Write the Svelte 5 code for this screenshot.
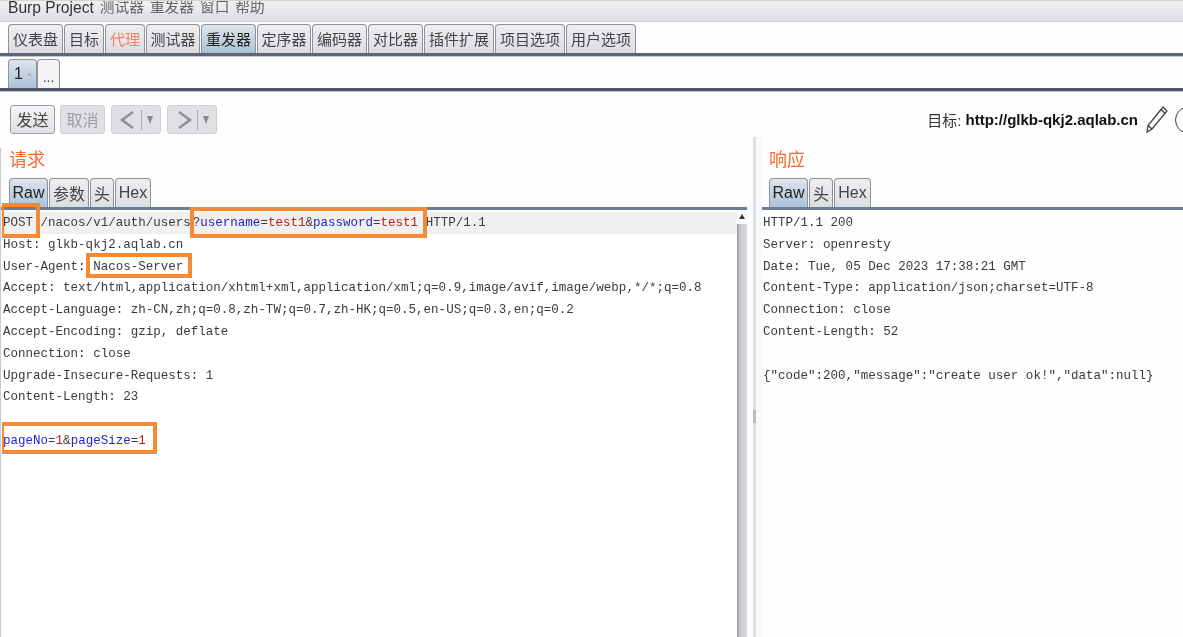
<script>
  const mainTabs = [
    { label: '仪表盘', w: 55 },
    { label: '目标', w: 40 },
    { label: '代理', w: 40, hot: true },
    { label: '测试器', w: 54 },
    { label: '重发器', w: 55, active: true },
    { label: '定序器', w: 54 },
    { label: '编码器', w: 55 },
    { label: '对比器', w: 55 },
    { label: '插件扩展', w: 70 },
    { label: '项目选项', w: 70 },
    { label: '用户选项', w: 70 }
  ];
  const menus = ['测试器', '重发器', '窗口', '帮助'];
  const requestTabs = [
    { label: 'Raw', w: 39, active: true },
    { label: '参数', w: 40 },
    { label: '头', w: 24 },
    { label: 'Hex', w: 36 }
  ];
  const responseTabs = [
    { label: 'Raw', w: 39, active: true },
    { label: '头', w: 24 },
    { label: 'Hex', w: 37 }
  ];
  const requestHeaders = [
    'Host: glkb-qkj2.aqlab.cn',
    'User-Agent: Nacos-Server',
    'Accept: text/html,application/xhtml+xml,application/xml;q=0.9,image/avif,image/webp,*/*;q=0.8',
    'Accept-Language: zh-CN,zh;q=0.8,zh-TW;q=0.7,zh-HK;q=0.5,en-US;q=0.3,en;q=0.2',
    'Accept-Encoding: gzip, deflate',
    'Connection: close',
    'Upgrade-Insecure-Requests: 1',
    'Content-Length: 23'
  ];
  const responseLines = [
    'HTTP/1.1 200',
    'Server: openresty',
    'Date: Tue, 05 Dec 2023 17:38:21 GMT',
    'Content-Type: application/json;charset=UTF-8',
    'Connection: close',
    'Content-Length: 52',
    '',
    '{"code":200,"message":"create user ok!","data":null}'
  ];
</script>

<div class="app">
  <div class="menubar">
    <span class="brand">Burp Project</span>
    {#each menus as m}
      <span class="menu">{m}</span>
    {/each}
  </div>

  <div class="tabs main-tabs">
    {#each mainTabs as t}
      <div class="tab" class:active={t.active} class:hot={t.hot} style="width: {t.w}px">{t.label}</div>
    {/each}
  </div>

  <div class="tabs sub-tabs">
    <div class="tab active first">1<span class="x">×</span></div>
    <div class="tab more">...</div>
  </div>

  <div class="toolbar">
    <button class="btn send">发送</button>
    <button class="btn off">取消</button>
    <button class="btn off nav">
      <svg width="20" height="20" viewBox="0 0 20 20"><path d="M15 2 L4 10 L15 18" fill="none" stroke="#8c8f93" stroke-width="2.6" /></svg>
      <i></i>
      <svg width="10" height="10" viewBox="0 0 10 10"><path d="M2 1 H8 L5 9 Z" fill="#85888c" /></svg>
    </button>
    <button class="btn off nav">
      <svg width="20" height="20" viewBox="0 0 20 20"><path d="M5 2 L16 10 L5 18" fill="none" stroke="#8c8f93" stroke-width="2.6" /></svg>
      <i></i>
      <svg width="10" height="10" viewBox="0 0 10 10"><path d="M2 1 H8 L5 9 Z" fill="#85888c" /></svg>
    </button>
    <div class="target">
      目标: <b>http://glkb-qkj2.aqlab.cn</b>
      <svg class="pencil" width="22" height="27" viewBox="0 0 22 27">
        <path d="M17 1 L21 5 L6 23 L1 26 L2 19.5 Z M2 19.5 L6 23 M15 3.5 L19 7.5" fill="none" stroke="#3a3a3a" stroke-width="1.2" />
      </svg>
      <span class="help"></span>
    </div>
  </div>

  <div class="panes">
    <section class="pane left">
      <h2>请求</h2>
      <div class="tabs editor-tabs">
        {#each requestTabs as t}
          <div class="tab" class:active={t.active} style="width: {t.w}px">{t.label}</div>
        {/each}
      </div>
      <div class="editor">
        <div class="code">
          <div class="line current">POST /nacos/v1/auth/users<span class="q">?</span><span class="k">username</span>=<span class="v">test1</span>&<span class="k">password</span>=<span class="v">test1</span> HTTP/1.1</div>
          {#each requestHeaders as line}
            <div class="line">{line}</div>
          {/each}
          <div class="line"></div>
          <div class="line"><span class="k">pageNo</span>=<span class="v">1</span>&<span class="k">pageSize</span>=<span class="v">1</span></div>
        </div>
        <div class="scrollbar">
          <span class="arrow"></span>
          <span class="thumb"></span>
        </div>
        <span class="mark post"></span>
        <span class="mark query"></span>
        <span class="mark agent"></span>
        <span class="mark body"></span>
      </div>
    </section>

    <div class="divider"><span></span></div>

    <section class="pane right">
      <h2>响应</h2>
      <div class="tabs editor-tabs">
        {#each responseTabs as t}
          <div class="tab" class:active={t.active} style="width: {t.w}px">{t.label}</div>
        {/each}
      </div>
      <div class="editor">
        <div class="code">
          {#each responseLines as line}
            <div class="line">{line}</div>
          {/each}
        </div>
      </div>
    </section>
  </div>
</div>

<style>
  :global(body) {
    margin: 0;
    overflow: hidden;
    background: #fdfdfd;
  }

  .app {
    width: 1183px;
    height: 637px;
    overflow: hidden;
    background: #fdfdfd;
    color: #333;
    font-family: "Liberation Sans", "Noto Sans CJK SC", sans-serif;
    filter: blur(0.35px);
  }

  .menubar {
    height: 20px;
    padding-left: 8px;
    border-top: 1px solid #d4d4d6;
    border-bottom: 1px solid #d0d0d4;
    background: linear-gradient(#f1f1f3, #dcdde2);
    display: flex;
    align-items: center;
    gap: 6px;
    font-size: 14.7px;
    line-height: 15px;
    overflow: hidden;
  }

  .brand {
    color: #333;
    font-size: 15.6px;
    margin-top: -7px;
  }

  .menu {
    color: #666;
    margin-top: -7px;
  }

  .tabs {
    display: flex;
    align-items: flex-end;
    box-sizing: border-box;
  }

  .tab {
    box-sizing: border-box;
    height: 100%;
    margin-right: 1px;
    border: 1px solid #8f9298;
    border-bottom: none;
    border-radius: 4px 4px 0 0;
    background: linear-gradient(#eeeef1, #dcdde2);
    display: flex;
    align-items: center;
    justify-content: center;
    white-space: nowrap;
    font-size: 15px;
    color: #444;
  }

  .tab.active {
    background: linear-gradient(#dfe5ec, #a9c2d8);
    color: #222;
  }

  .tab.hot {
    color: #f5835f;
  }

  .main-tabs {
    height: 34px;
    padding-top: 2px;
    padding-left: 8px;
    border-bottom: 3px solid #5b6678;
    background: #fdfdfd;
    box-shadow: 0 1px 0 #c3c7ce;
  }

  .main-tabs .tab {
    padding-bottom: 2px;
  }

  .sub-tabs {
    height: 35px;
    padding: 3px 0 0 8px;
    border-bottom: 3px solid #4c586a;
    box-shadow: 0 1px 0 #c3c7ce;
  }

  .sub-tabs .first {
    width: 29px;
    justify-content: flex-start;
    padding-left: 5px;
    margin-right: 0;
    font-size: 16px;
  }

  .sub-tabs .more {
    width: 23px;
    padding-top: 6px;
    font-size: 14px;
    background: #f4f4f6;
  }

  .x {
    margin-left: 4px;
    font-size: 8px;
    color: #999;
  }

  .toolbar {
    height: 57px;
    box-sizing: border-box;
    padding: 14px 0 0 10px;
    display: flex;
    align-items: flex-start;
    gap: 5px;
  }

  .btn {
    width: 45px;
    height: 29px;
    padding: 0 0 2px;
    box-sizing: border-box;
    border: 1px solid #9a9da3;
    border-radius: 3px;
    background: linear-gradient(#f4f4f6, #dfe0e4);
    font: 16px "Liberation Sans", "Noto Sans CJK SC", sans-serif;
    color: #444;
    display: flex;
    align-items: center;
    justify-content: center;
  }

  .btn.off {
    border-color: #d0d1d5;
    background: #dfe0e3;
    color: #9b9da1;
  }

  .nav {
    width: 50px;
    margin-left: 1px;
    padding: 0;
    gap: 3px;
  }

  .nav i {
    width: 1px;
    height: 20px;
    background: #a8aaae;
  }

  .target {
    margin-left: auto;
    margin-right: -20px;
    height: 29px;
    display: flex;
    align-items: center;
    gap: 4px;
    font-size: 15px;
    color: #333;
  }

  .target b {
    color: #111;
  }

  .pencil {
    margin-left: 4px;
  }

  .help {
    width: 28px;
    height: 28px;
    box-sizing: border-box;
    margin-left: 3px;
    border: 1.5px solid #444;
    border-radius: 50%;
  }

  .panes {
    display: flex;
    height: 546px;
  }

  .pane h2 {
    margin: 0;
    height: 30px;
    font-size: 18px;
    font-weight: 400;
    line-height: 24px;
    color: #f96a32;
  }

  .left {
    width: 747px;
    box-sizing: border-box;
    border-left: 1px solid #c9cbd0;
  }

  .left h2 {
    padding-left: 8px;
  }

  .right {
    flex: 1;
  }

  .right h2 {
    padding-left: 7px;
  }

  .editor-tabs {
    height: 32px;
    padding-left: 8px;
    border-bottom: 3px solid #6e7d92;
  }

  .right .editor-tabs {
    padding-left: 7px;
  }

  .editor-tabs .tab {
    font-size: 16px;
  }

  .editor {
    position: relative;
    height: 484px;
    background: #fff;
    display: flex;
  }

  .code {
    flex: 1;
    padding-top: 2px;
    font-family: "Liberation Mono", "Noto Sans CJK SC", monospace;
    font-size: 12.53px;
    color: #3a3a3a;
  }

  .line {
    height: 21.8px;
    line-height: 23.8px;
    padding-left: 2px;
    white-space: pre;
  }

  .right .line {
    padding-left: 1px;
  }

  .current {
    background: #f0f0f0;
  }

  .q {
    margin-left: 2px;
  }

  .k {
    color: #2323c8;
  }

  .v {
    color: #b02323;
  }

  .scrollbar {
    width: 10px;
    background: #fbfbfb;
    display: flex;
    flex-direction: column;
  }

  .arrow {
    height: 14px;
    position: relative;
  }

  .arrow::after {
    content: '';
    position: absolute;
    left: 2px;
    top: 4px;
    border: 3px solid transparent;
    border-top: none;
    border-bottom: 5px solid #333;
  }

  .thumb {
    flex: 1;
    background: linear-gradient(90deg, #96989e, #c9cbd0 30%, #d8d9dd);
  }

  .mark {
    position: absolute;
    box-sizing: border-box;
    border: 4px solid #f58a36;
  }

  .post {
    left: 1px;
    top: -7px;
    width: 38px;
    height: 35px;
    border-left-width: 2px;
  }

  .query {
    left: 189px;
    top: -3px;
    width: 237px;
    height: 31px;
  }

  .agent {
    left: 85px;
    top: 43px;
    width: 106px;
    height: 25px;
  }

  .body {
    left: 1px;
    top: 212px;
    width: 155px;
    height: 32px;
    border-left-width: 2px;
  }

  .divider {
    width: 15px;
    margin-top: -11px;
    position: relative;
    background: linear-gradient(90deg, transparent 40%, #dcdfe5 40%, #dcdfe5 60%, #f8f9fa 60%);
  }

  .divider span {
    position: absolute;
    left: 6px;
    top: 273px;
    width: 3px;
    height: 13px;
    background: #b8bcc3;
  }

  .right .editor {
    background: #fdfdfd;
  }
</style>
